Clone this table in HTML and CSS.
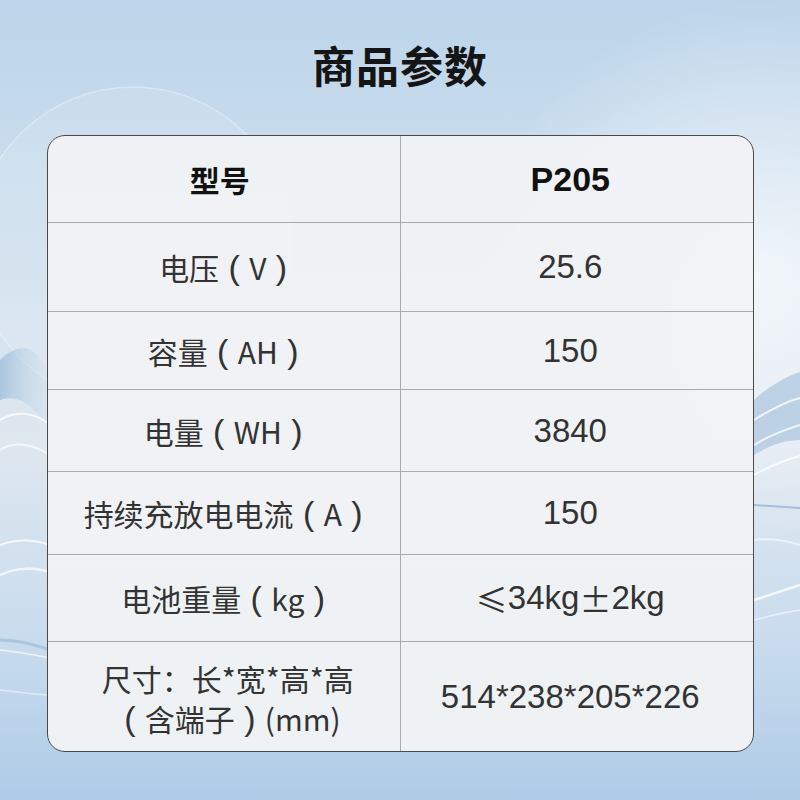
FILE: index.html
```html
<!DOCTYPE html>
<html lang="zh-CN">
<head>
<meta charset="utf-8">
<title>商品参数</title>
<link rel="stylesheet" href="styles.css">
</head>
<body>
<div class="page">
  <svg class="backdrop" viewBox="0 0 800 800" width="800" height="800" aria-hidden="true">
    <defs>
      <linearGradient id="bg" x1="0" y1="0" x2="0" y2="1">
        <stop offset="0" stop-color="#bcd5ea"/>
        <stop offset="0.3" stop-color="#cfe0ee"/>
        <stop offset="0.55" stop-color="#dfe7ef"/>
        <stop offset="0.8" stop-color="#c9dcee"/>
        <stop offset="1" stop-color="#aecbe7"/>
      </linearGradient>
      <radialGradient id="glowR" cx="0.95" cy="0.35" r="0.35">
        <stop offset="0" stop-color="#ffffff" stop-opacity="0.7"/>
        <stop offset="1" stop-color="#ffffff" stop-opacity="0"/>
      </radialGradient>
      <linearGradient id="waveL" x1="0" y1="0" x2="1" y2="0">
        <stop offset="0" stop-color="#9fbedc"/>
        <stop offset="1" stop-color="#c8dbec" stop-opacity="0.2"/>
      </linearGradient>
    </defs>
    <rect width="800" height="800" fill="url(#bg)"/>
    <rect width="800" height="800" fill="url(#glowR)"/>
    <circle cx="133" cy="246" r="159" fill="#ffffff" fill-opacity="0.12" stroke="#ffffff" stroke-opacity="0.35" stroke-width="1.5"/>
    <path d="M0 360 C 20 340, 40 345, 50 380 L 50 430 C 30 400, 15 395, 0 400 Z" fill="url(#waveL)" opacity="0.8"/>
    <path d="M0 420 C 15 410, 35 412, 50 425" stroke="#ffffff" stroke-width="2" fill="none" opacity="0.8"/>
    <path d="M0 450 C 15 440, 35 445, 50 455" stroke="#ffffff" stroke-width="2" fill="none" opacity="0.7"/>
    <path d="M0 545 C 20 538, 35 540, 50 545" stroke="#ffffff" stroke-width="2" fill="none" opacity="0.8"/>
    <path d="M0 575 C 20 566, 35 568, 50 572" stroke="#ffffff" stroke-width="2.5" fill="none" opacity="0.7"/>
    <path d="M0 640 C 20 640, 35 645, 50 650" stroke="#98b6d2" stroke-width="3" fill="none" opacity="0.6"/>
    <path d="M0 650 C 20 652, 35 655, 50 658" stroke="#ffffff" stroke-width="1.5" fill="none" opacity="0.7"/>
    <path d="M0 690 C 20 692, 35 695, 50 695" stroke="#ffffff" stroke-width="1.5" fill="none" opacity="0.5"/>
    <path d="M754 400 C 770 385, 790 375, 800 372 L 800 440 C 785 440, 770 445, 754 455 Z" fill="#a9c4de" opacity="0.7"/>
    <path d="M754 420 C 770 410, 785 402, 800 398" stroke="#ffffff" stroke-width="2" fill="none" opacity="0.8"/>
    <path d="M754 445 C 770 435, 785 430, 800 425" stroke="#ffffff" stroke-width="2" fill="none" opacity="0.8"/>
    <path d="M754 475 C 770 466, 785 460, 800 456" stroke="#ffffff" stroke-width="2" fill="none" opacity="0.8"/>
    <path d="M754 505 L 800 508" stroke="#8fafcf" stroke-width="2" fill="none" opacity="0.7"/>
    <path d="M754 540 C 770 538, 785 540, 800 545" stroke="#ffffff" stroke-width="2" fill="none" opacity="0.6"/>
    <path d="M754 600 C 770 595, 785 590, 800 585" stroke="#ffffff" stroke-width="2.5" fill="none" opacity="0.8"/>
    <path d="M754 620 C 770 616, 785 612, 800 610" stroke="#ffffff" stroke-width="1.5" fill="none" opacity="0.6"/>
  </svg>

  <h1 class="title">商品参数</h1>

  <div class="spec">
    <div class="cell key head">型号</div>
    <div class="cell val head">P205</div>

    <div class="cell key">电压<span class="pa">(</span>V<span class="pa">)</span></div>
    <div class="cell val">25.6</div>

    <div class="cell key">容量<span class="pa">(</span>AH<span class="pa">)</span></div>
    <div class="cell val">150</div>

    <div class="cell key">电量<span class="pa">(</span>WH<span class="pa">)</span></div>
    <div class="cell val">3840</div>

    <div class="cell key">持续充放电电流<span class="pa">(</span>A<span class="pa">)</span></div>
    <div class="cell val">150</div>

    <div class="cell key">电池重量<span class="pa">(</span>kg<span class="pa">)</span></div>
    <div class="cell val"><span class="fw">≤</span>34kg<span class="fw">±</span>2kg</div>

    <div class="cell key two-line"><span class="line">尺寸：长*宽*高*高</span><span class="line"><span class="pa">(</span>含端子<span class="pa">)</span>(mm)</span></div>
    <div class="cell val">514*238*205*226</div>
  </div>
</div>
</body>
</html>
```

FILE: styles.css
```css
html, body {
  margin: 0;
  padding: 0;
}

body {
  width: 800px;
  height: 800px;
  overflow: hidden;
  font-family: "Noto Sans CJK SC", "Noto Sans", sans-serif;
}

.page {
  position: relative;
  width: 800px;
  height: 800px;
  padding-top: 43px;
  box-sizing: border-box;
}

.backdrop {
  position: absolute;
  left: 0;
  top: 0;
  z-index: 0;
}

.title {
  position: relative;
  z-index: 1;
  margin: 0 0 49px;
  height: 43px;
  font-size: 43px;
  line-height: 43px;
  font-weight: 700;
  text-align: center;
  color: #151515;
  letter-spacing: 1px;
}

.spec {
  position: relative;
  z-index: 1;
  margin-left: 47px;
  width: 707px;
  box-sizing: border-box;
  border: 1.5px solid #4a4a4a;
  border-radius: 18px;
  overflow: hidden;
  background: rgba(240, 242, 245, 0.96);
  display: grid;
  grid-template-columns: 1fr 1fr;
  grid-template-rows: 87px 89px 78px 82px 83px 87px 109px;
}

.cell {
  display: flex;
  align-items: center;
  justify-content: center;
  text-align: center;
  box-sizing: border-box;
  border-bottom: 1px solid #ababab;
  color: #333333;
  white-space: nowrap;
}

.cell:nth-last-child(-n+2) {
  border-bottom: none;
}

.key {
  border-right: 1px solid #ababab;
  padding-left: 8px;
  font-family: "Noto Sans CJK SC", "Noto Sans", sans-serif;
  font-size: 30px;
  line-height: 40px;
}

.val {
  padding-right: 13px;
  font-family: "Liberation Sans", Arial, sans-serif;
  font-size: 33px;
}

.key.head {
  padding-left: 0;
  padding-right: 8px;
  font-weight: 700;
  color: #111111;
}

.val.head {
  font-weight: 700;
  font-size: 34px;
  color: #111111;
}

.two-line {
  flex-direction: column;
  padding-top: 2px;
}

.line {
  display: block;
}

.pa {
  display: inline-block;
  width: 30px;
  text-align: center;
  font-family: "Liberation Sans", sans-serif;
  font-size: 34px;
  font-weight: 300;
  line-height: 40px;
  vertical-align: top;
}

.fw {
  display: inline-block;
  width: 1em;
  text-align: center;
  font-family: "Noto Sans CJK SC", sans-serif;
  font-size: 32px;
}
```
